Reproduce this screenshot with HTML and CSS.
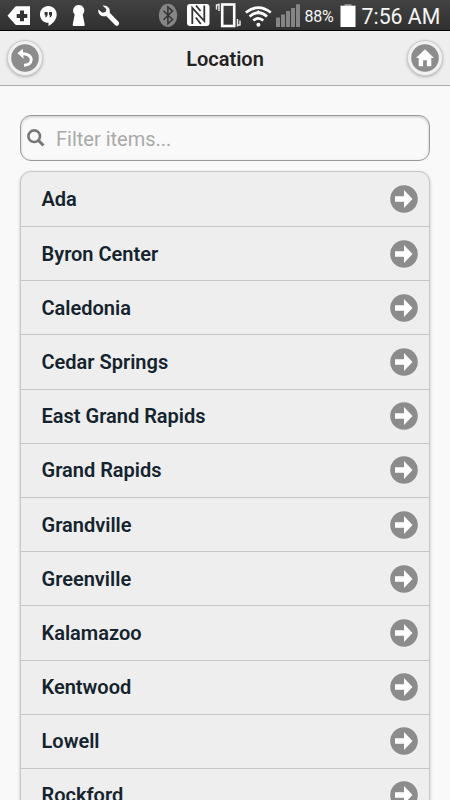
FILE: index.html
```html
<!DOCTYPE html>
<html lang="en">
<head>
    <meta charset="UTF-8">
    <meta name="viewport" content="width=device-width, initial-scale=1.0">
    <title>Location</title>
    <link rel="stylesheet" href="styles.css">
</head>
<body>
<svg class="symbols" width="0" height="0">
    <symbol id="arrow" viewBox="0 0 28 28">
        <circle cx="14" cy="14" r="13.8" fill="#8c8c8c"/>
        <path d="M5 11.2h9V5l8.5 9-8.5 9v-6.2H5z" fill="#fff"/>
    </symbol>
</svg>

<div class="status-bar">
    <svg class="status-left" width="124" height="30" viewBox="0 0 124 30" fill="#fff">
        <!-- back tag with plus -->
        <path d="M7.5 15.8L15 7q.6-.7 1.5-.7H30V25H16.5q-.9 0-1.5-.7z"/>
        <path d="M20 10.500h4v3.500h3.300v4H24v3.300h-4V18h-3.300v-4H20z" fill="#333"/>
        <!-- chat -->
        <path d="M48.300 6c4.900 0 8.400 3.700 8.400 8.400 0 4.800-3.500 9-8.200 11.600v-3.200c-5 0-8.500-3.700-8.500-8.400S43.500 6 48.300 6z"/>
        <path d="M44.600 12h3v3.300l-1.300 2h-1.200l.6-2h-1.100zM49 12h3v3.300l-1.300 2h-1.200l.6-2H49z" fill="#333"/>
        <!-- keyhole -->
        <path d="M78.700 4.900a5.600 5.600 0 0 1 4 9.500l2 10q.2 1.500-1.200 1.500h-9.600q-1.400 0-1.200-1.500l2-10A5.600 5.600 0 0 1 78.700 4.900z"/>
        <!-- wrench -->
        <path d="M102.500 5.600c4-1 8.200 2.200 7.200 7.100l9 9.300q1 1.500-.2 2.900-1.500 1.600-3.200.3l-9.100-9.100c-4.600 1.100-8.700-2.200-7.900-6.700l4.100 3.400 3.200-.8.800-3z"/>
    </svg>
    <svg class="status-right" width="143" height="30" viewBox="158 0 143 30">
        <!-- bluetooth -->
        <ellipse cx="168" cy="15.400" rx="9.200" ry="11.600" fill="#858585"/>
        <path d="M163.500 10.800l9 8.700-4.600 4.200V7l4.600 4.100-9 8.700" fill="none" stroke="#333" stroke-width="1.500"/>
        <!-- nfc -->
        <rect x="187" y="4" width="22.500" height="22" rx="3" fill="#fff"/>
        <path d="M192.300 24V7.800l12 13.200V5.500M196 5.500l4.500 5.500M195.800 17.500l5 6.500" fill="none" stroke="#333" stroke-width="1.800"/>
        <!-- vibrate -->
        <rect x="222.200" y="4.500" width="12" height="21.500" fill="none" stroke="#fff" stroke-width="2.600"/>
        <path d="M219 3.500v7.500M219 5h-2.500v4.500M237.500 19v7.500M237.500 25h2.500v-4.500" fill="none" stroke="#eee" stroke-width="1.400"/>
        <!-- wifi -->
        <g fill="none" stroke="#fff" stroke-width="2.700">
            <path d="M245.800 12.500q12.500-9.800 25 0"/>
            <path d="M249.600 16.500q8.700-7.500 17.400 0"/>
            <path d="M253.300 20.600q5-4.500 10 0"/>
        </g>
        <path d="M255 14l3.300-4 3.300 4z" fill="#fff"/>
        <circle cx="258.400" cy="24.800" r="2" fill="#fff"/>
        <!-- signal -->
        <path d="M276 17.500h4V27h-4zM281 14.500h4V27h-4zM286 11h4v16h-4zM291 8h4v19h-4zM296 4.300h4V27h-4z" fill="#858585"/>
    </svg>
    <span class="percent">88%</span>
    <svg class="battery" width="16" height="30" viewBox="0 0 16 30">
        <path d="M4.500 4h7v2.500h-7z" fill="#888"/>
        <path d="M.5 5.700h15V27H.5z" fill="#fff"/>
    </svg>
    <span class="clock">7:56 AM</span>
</div>

<div class="header">
    <a class="button">
        <svg width="28" height="28" viewBox="0 0 28 28">
            <circle cx="14" cy="14" r="13.8" fill="#8c8c8c"/>
            <path d="M10 9.800c6.500-.4 10.500 2.200 10.200 6.200-.3 3.300-3 5.100-7.200 5.300" fill="none" stroke="#fff" stroke-width="2.900"/>
            <path d="M6.500 9.300l5.300-4.600.8 10.100z" fill="#fff"/>
        </svg>
    </a>
    <h1>Location</h1>
    <a class="button">
        <svg width="28" height="28" viewBox="0 0 28 28">
            <circle cx="14" cy="14" r="13.8" fill="#8c8c8c"/>
            <path d="M14 5.300l9 8.600h-2.700v8.400h-4.400v-6h-3.800v6H7.700v-8.400H5z" fill="#fff"/>
        </svg>
    </a>
</div>

<div class="content">
    <div class="search">
        <svg width="18" height="18" viewBox="0 0 18 18" fill="none" stroke="#777">
            <circle cx="7.200" cy="7.200" r="5.800" stroke-width="2.600"/>
            <path d="M11 11l5.500 5.500" stroke-width="3"/>
        </svg>
        <input type="text" placeholder="Filter items...">
    </div>

    <ul class="list">
        <li>Ada<svg><use href="#arrow"/></svg></li>
        <li>Byron Center<svg><use href="#arrow"/></svg></li>
        <li>Caledonia<svg><use href="#arrow"/></svg></li>
        <li>Cedar Springs<svg><use href="#arrow"/></svg></li>
        <li>East Grand Rapids<svg><use href="#arrow"/></svg></li>
        <li>Grand Rapids<svg><use href="#arrow"/></svg></li>
        <li>Grandville<svg><use href="#arrow"/></svg></li>
        <li>Greenville<svg><use href="#arrow"/></svg></li>
        <li>Kalamazoo<svg><use href="#arrow"/></svg></li>
        <li>Kentwood<svg><use href="#arrow"/></svg></li>
        <li>Lowell<svg><use href="#arrow"/></svg></li>
        <li>Rockford<svg><use href="#arrow"/></svg></li>
    </ul>
</div>
</body>
</html>
```
FILE: styles.css
```css
* {
    box-sizing: border-box;
}

body {
    font-family: Roboto, sans-serif;
    margin: 0;
    height: 800px;
    overflow: hidden;
    background-color: #f9f9f9;
    color: #222;
}

svg {
    display: block;
    flex-shrink: 0;
}

.symbols {
    display: none;
}

.status-bar {
    display: flex;
    align-items: center;
    height: 31px;
    background: linear-gradient(#424242, #303030);
    border-bottom: 1px solid #000;
    color: #f5f5f5;
    white-space: nowrap;
}

.status-right {
    margin-left: 34px;
}

.percent {
    width: 35px;
    margin-left: 3.5px;
    padding-top: 3px;
    font-size: 16px;
    letter-spacing: -0.2px;
}

.battery {
    margin-left: 0.5px;
}

.clock {
    margin-left: 5.5px;
    padding-top: 2px;
    font-size: 21.3px;
}

.header {
    display: flex;
    align-items: center;
    justify-content: space-between;
    height: 55px;
    padding: 0 7px;
    background-color: #eee;
    border-bottom: 1px solid #aaa;
}

.header h1 {
    margin: 0;
    padding-top: 2px;
    font-size: 20px;
    font-weight: 600;
    text-shadow: 0 1px 0 #f3f3f3;
}

.button {
    display: flex;
    align-items: center;
    justify-content: center;
    width: 36px;
    height: 36px;
    background-color: #f1f1f1;
    border: 1px solid #ccc;
    border-radius: 50%;
    box-shadow: 0 1px 3px rgba(0, 0, 0, 0.25);
}

.content {
    padding: 29px 20px 0;
}

.search {
    display: flex;
    align-items: center;
    height: 46px;
    padding-left: 6px;
    border: 1px solid #999;
    border-radius: 11px;
    box-shadow: inset 0 1px 3px rgba(0, 0, 0, 0.2);
}

.search input {
    flex: 1;
    min-width: 0;
    margin-left: 11px;
    padding: 2px 0 0;
    border: none;
    outline: none;
    background: none;
    font-family: inherit;
    font-size: 20px;
}

.search input::placeholder {
    color: #a9a9a9;
}

.list {
    list-style: none;
    margin: 10px 0 0;
    padding: 0;
    background-color: #eee;
    border: 1px solid #c8c8c8;
    border-radius: 11px;
    box-shadow: 0 1px 3px rgba(0, 0, 0, 0.25);
}

.list li {
    display: flex;
    align-items: center;
    justify-content: space-between;
    height: 54.2px;
    padding: 0 11.5px 0 20.5px;
    border-bottom: 1px solid #c6c6c6;
    color: #14232d;
    font-size: 20px;
    font-weight: 600;
    text-shadow: 0 1px 0 #f3f3f3;
}

.list li:first-child {
    height: 55px;
}

.list svg {
    width: 28px;
    height: 28px;
}
```
